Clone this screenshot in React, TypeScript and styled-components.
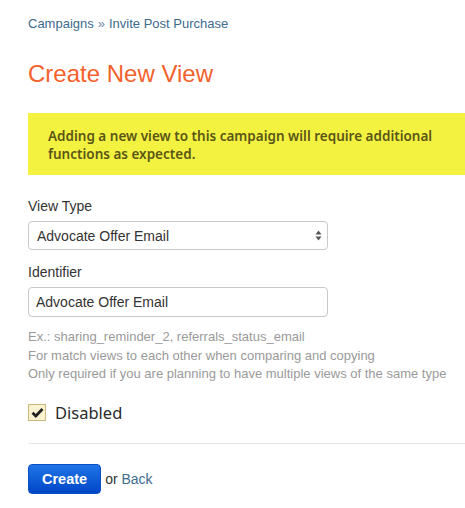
import React, { useState } from "react";
import styled, { createGlobalStyle } from "styled-components";

const GlobalStyle = createGlobalStyle`
  html, body {
    margin: 0;
    padding: 0;
    background: #fff;
    overflow: hidden;
  }
  body {
    font-family: "Liberation Sans", Arial, sans-serif;
    color: #333;
  }
`;

const Page = styled.div`
  width: 760px;
  padding: 15px 0 0 28px;
  box-sizing: border-box;
`;

const Breadcrumb = styled.div`
  font-size: 13px;
  line-height: 18px;
  color: #3d6b8e;
`;

const Crumb = styled.a`
  color: inherit;
  text-decoration: none;
`;

const Separator = styled.span`
  color: #6f8da5;
  margin: 0 4px;
`;

const Title = styled.h1`
  margin: 25px 0 0;
  font-size: 24px;
  line-height: 32px;
  font-weight: 400;
  color: #f4622c;
`;

const Banner = styled.div`
  margin-top: 23px;
  background: #f4f241;
  padding: 14px 20px 12px;
  font-family: "Noto Sans", "Open Sans", sans-serif;
  font-weight: 600;
  font-size: 13.5px;
  line-height: 18px;
  color: #5a5617;
  white-space: nowrap;
`;

const Form = styled.form`
  display: flex;
  flex-direction: column;
  margin-top: 22px;
`;

const Label = styled.label`
  font-size: 14px;
  line-height: 18px;
  color: #333;
  margin-bottom: 6px;
`;

const SelectWrap = styled.div`
  position: relative;
  width: 300px;
  margin-bottom: 13px;
`;

const Select = styled.select`
  appearance: none;
  width: 300px;
  height: 29px;
  border: 1px solid #c9c9c9;
  border-radius: 4px;
  background: #fff;
  padding: 0 8px;
  font-family: "Liberation Sans", Arial, sans-serif;
  font-size: 14px;
  color: #333;
  outline: none;
`;

const Arrows = styled.svg`
  position: absolute;
  right: 6px;
  top: 9px;
  pointer-events: none;
`;

const TextInput = styled.input`
  width: 300px;
  height: 30px;
  box-sizing: border-box;
  border: 1px solid #c9c9c9;
  border-radius: 4px;
  padding: 0 7px;
  font-family: "Liberation Sans", Arial, sans-serif;
  font-size: 14px;
  color: #333;
  outline: none;
`;

const Help = styled.div`
  margin-top: 11px;
  font-size: 13px;
  line-height: 18.5px;
  color: #9a9a9a;
`;

const CheckRow = styled.label`
  display: flex;
  align-items: center;
  gap: 9px;
  margin-top: 17px;
  cursor: pointer;
`;

const Box = styled.span<{ $checked: boolean }>`
  width: 18px;
  height: 17px;
  box-sizing: border-box;
  border: 1px solid #c9b77d;
  background: #fbf2cf;
  display: flex;
  align-items: center;
  justify-content: center;
`;

const CheckText = styled.span`
  font-family: "Noto Sans", "Open Sans", sans-serif;
  font-size: 16.5px;
  color: #2b2b2b;
`;

const Rule = styled.hr`
  border: 0;
  border-top: 1px solid #e6e6e6;
  margin: 19px 0 0;
`;

const Actions = styled.div`
  display: flex;
  align-items: center;
  gap: 4px;
  margin-top: 20px;
  font-size: 14px;
  color: #333;
`;

const Button = styled.button`
  height: 30px;
  padding: 0 13px;
  border: 1px solid #0a4fc4;
  border-radius: 4px;
  background: linear-gradient(#1f75e6, #0046c7);
  color: #fff;
  font-family: "Liberation Sans", Arial, sans-serif;
  font-weight: 700;
  font-size: 14.5px;
  cursor: pointer;
`;

const BackLink = styled.a`
  color: #3d6b8e;
  text-decoration: none;
`;

const App = () => {
  const [disabled, setDisabled] = useState(true);
  return (
    <>
      <GlobalStyle />
      <Page>
        <Breadcrumb>
          <Crumb href="#">Campaigns</Crumb>
          <Separator>»</Separator>
          <Crumb href="#">Invite Post Purchase</Crumb>
        </Breadcrumb>
        <Title>Create New View</Title>
        <Banner>
          Adding a new view to this campaign will require additional
          <br />
          functions as expected.
        </Banner>
        <Form onSubmit={(e) => e.preventDefault()}>
          <Label>View Type</Label>
          <SelectWrap>
            <Select defaultValue="advocate_offer_email">
              <option value="advocate_offer_email">Advocate Offer Email</option>
            </Select>
            <Arrows width="7" height="11" viewBox="0 0 7 11">
              <path d="M3.5 0.5 L6.5 4.5 L0.5 4.5 Z" fill="#555" />
              <path d="M3.5 10.5 L6.5 6.5 L0.5 6.5 Z" fill="#555" />
            </Arrows>
          </SelectWrap>
          <Label>Identifier</Label>
          <TextInput defaultValue="Advocate Offer Email" />
          <Help>
            Ex.: sharing_reminder_2, referrals_status_email
            <br />
            For match views to each other when comparing and copying
            <br />
            Only required if you are planning to have multiple views of the same type
          </Help>
          <CheckRow onClick={() => setDisabled((v) => !v)}>
            <Box $checked={disabled}>
              {disabled && (
                <svg width="13" height="11" viewBox="0 0 13 11">
                  <path
                    d="M1.5 5.8 L4.8 9 L11.5 2"
                    fill="none"
                    stroke="#222"
                    strokeWidth="2.8"
                  />
                </svg>
              )}
            </Box>
            <CheckText>Disabled</CheckText>
          </CheckRow>
          <Rule />
          <Actions>
            <Button type="submit">Create</Button>
            <span>
              or <BackLink href="#">Back</BackLink>
            </span>
          </Actions>
        </Form>
      </Page>
    </>
  );
};

export default App;
